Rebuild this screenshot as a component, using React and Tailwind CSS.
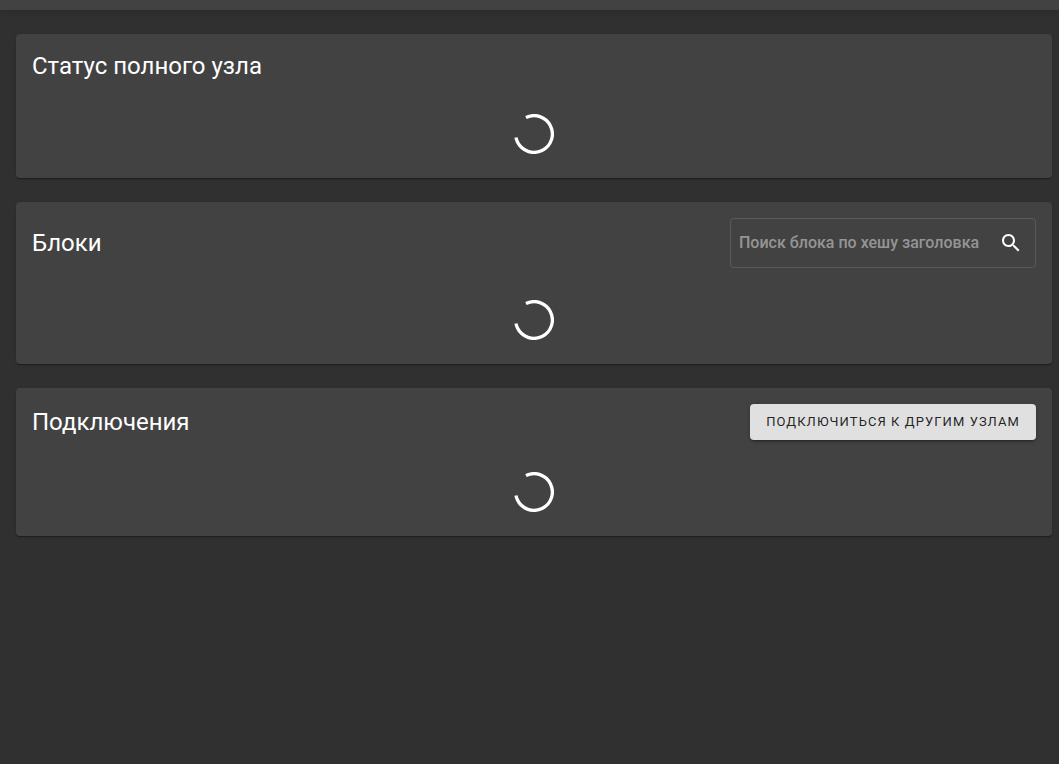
import React, { useState } from 'react';

const Spinner = () => (
  <div role="progressbar" aria-label="Загрузка" className="flex justify-center">
    <svg viewBox="0 0 44 44" className="w-10 h-10" fill="none">
      <circle
        cx="22"
        cy="22"
        r="20.2"
        stroke="#fff"
        strokeWidth="3.6"
        strokeDasharray="100 200"
        transform="rotate(-116 22 22)"
      />
    </svg>
  </div>
);

const Card = ({ title, action }) => (
  <section className="flex flex-col gap-8 rounded bg-[#424242] px-4 pt-4 pb-6 shadow-[0_2px_1px_-1px_rgba(0,0,0,0.2),0_1px_1px_0_rgba(0,0,0,0.14),0_1px_3px_0_rgba(0,0,0,0.12)]">
    <div className="flex items-center justify-between gap-4">
      <h2 className="text-2xl leading-8 font-normal text-white">{title}</h2>
      {action}
    </div>
    <Spinner />
  </section>
);

const SearchBlock = () => {
  const [hash, setHash] = useState('');

  return (
    <form
      onSubmit={(e) => e.preventDefault()}
      className="flex w-[306px] items-center gap-2 rounded border border-white/12 pl-2"
    >
      <input
        type="text"
        value={hash}
        onChange={(e) => setHash(e.target.value)}
        aria-label="Поиск блока по хешу заголовка"
        placeholder="Поиск блока по хешу заголовка"
        className="min-w-0 flex-1 bg-transparent text-base font-medium text-white placeholder:text-white/45 focus:outline-none"
      />
      <button type="submit" aria-label="Поиск" className="rounded-full p-3 text-white hover:bg-white/10">
        <svg viewBox="0 0 24 24" className="w-6 h-6" fill="currentColor">
          <path d="M15.5 14h-.79l-.28-.27C15.41 12.59 16 11.11 16 9.5 16 5.91 13.09 3 9.5 3S3 5.91 3 9.5 5.91 16 9.5 16c1.61 0 3.09-.59 4.23-1.57l.27.28v.79l5 4.99L20.49 19l-4.99-5zm-6 0C7.01 14 5 11.99 5 9.5S7.01 5 9.5 5 14 7.01 14 9.5 11.99 14 9.5 14z" />
        </svg>
      </button>
    </form>
  );
};

const ConnectButton = () => (
  <button
    type="button"
    className="rounded bg-[#e0e0e0] px-4 py-1.5 text-[13px] leading-6 font-normal tracking-[0.083em] text-black/87 uppercase shadow-[0_3px_1px_-2px_rgba(0,0,0,0.2),0_2px_2px_0_rgba(0,0,0,0.14),0_1px_5px_0_rgba(0,0,0,0.12)] hover:bg-[#d5d5d5]"
  >
    Подключиться к другим узлам
  </button>
);

const App = () => {
  return (
    <div className="min-h-screen bg-[#303030] font-[Roboto,sans-serif]">
      {/* Bottom edge of the app bar */}
      <header className="h-[10px] bg-[#424242] shadow-[0_0_8px_0_rgba(0,0,0,0.2)]" />

      <main className="flex flex-col gap-6 py-6 pr-[7px] pl-4">
        <Card title="Статус полного узла" />
        <Card title="Блоки" action={<SearchBlock />} />
        <Card title="Подключения" action={<ConnectButton />} />
      </main>
    </div>
  );
};

export default App;
